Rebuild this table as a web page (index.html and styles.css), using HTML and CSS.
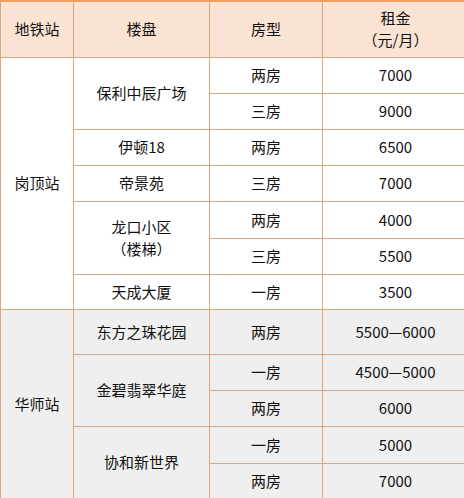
FILE: index.html
```html
<!DOCTYPE html>
<html lang="zh">
<head>
<meta charset="utf-8">
<link rel="stylesheet" href="styles.css">
</head>
<body>
<table class="rent">
  <thead>
    <tr class="h-head">
      <th class="c1">地铁站</th>
      <th class="c2">楼盘</th>
      <th class="c3">房型</th>
      <th class="c4">租金<br>（元/月）</th>
    </tr>
  </thead>
  <tbody class="sec-a">
    <tr class="h36">
      <td rowspan="7">岗顶站</td>
      <td rowspan="2">保利中辰广场</td>
      <td>两房</td><td>7000</td>
    </tr>
    <tr class="h36"><td>三房</td><td>9000</td></tr>
    <tr class="h36"><td>伊顿18</td><td>两房</td><td>6500</td></tr>
    <tr class="h36"><td>帝景苑</td><td>三房</td><td>7000</td></tr>
    <tr class="h37">
      <td rowspan="2" class="two">龙口小区<br>（楼梯）</td>
      <td>两房</td><td>4000</td>
    </tr>
    <tr class="h36"><td>三房</td><td>5500</td></tr>
    <tr class="h35"><td>天成大厦</td><td>一房</td><td>3500</td></tr>
  </tbody>
  <tbody class="sec-b">
    <tr class="h45">
      <td rowspan="5">华师站</td>
      <td>东方之珠花园</td>
      <td>两房</td><td>5500—6000</td>
    </tr>
    <tr class="h36">
      <td rowspan="2">金碧翡翠华庭</td>
      <td>一房</td><td>4500—5000</td>
    </tr>
    <tr class="h36"><td>两房</td><td>6000</td></tr>
    <tr class="h37">
      <td rowspan="2">协和新世界</td>
      <td>一房</td><td>5000</td>
    </tr>
    <tr class="h35"><td>两房</td><td>7000</td></tr>
  </tbody>
</table>
</body>
</html>
```

FILE: styles.css
```css
html, body {
  margin: 0;
  padding: 0;
  background: #ffffff;
}

.rent {
  width: 464px;
  border-collapse: collapse;
  table-layout: fixed;
  font-family: "Noto Sans CJK SC", "Noto Sans", sans-serif;
  font-size: 15px;
  color: #111111;
}

.rent th,
.rent td {
  border: 1px solid #d9a882;
  padding: 0;
  text-align: center;
  vertical-align: middle;
  font-weight: normal;
  line-height: 22px;
}

.rent thead th {
  background: #fbe3d4;
  border-top: 2px solid #ef9f62;
}

.c1 { width: 72px; }
.c2 { width: 135px; }
.c3 { width: 112px; }
.c4 { width: 145px; }

.h-head { height: 56px; }
.h35 { height: 35px; }
.h36 { height: 36px; }
.h37 { height: 37px; }
.h45 { height: 45px; }

.sec-a td { background: #ffffff; }
.sec-b td { background: #efefef; }

.two { line-height: 24px; }
```
